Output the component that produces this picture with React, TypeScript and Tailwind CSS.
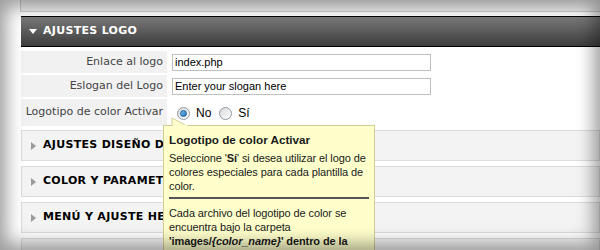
import React from "react";

function Radio({ checked }: { checked?: boolean }) {
  return (
    <span className="flex h-[13px] w-[13px] items-center justify-center rounded-full border border-[#8f9aa6] bg-gradient-to-br from-[#d8d8d8] to-[#ffffff]">
      {checked && (
        <span className="h-[7px] w-[7px] rounded-full border border-[#1c5f9a] bg-gradient-to-br from-[#7fc0f0] to-[#1b6fb5]" />
      )}
    </span>
  );
}

export default function App() {
  const fields = [
    { label: "Enlace al logo", value: "index.php" },
    { label: "Eslogan del Logo", value: "Enter your slogan here" },
  ];

  const sections = ["AJUSTES DISEÑO DE LA PLANTILLA", "COLOR Y PARAMETROS", "MENÚ Y AJUSTE HEADER", ""];

  return (
    <div className="relative h-[250px] w-[600px] overflow-hidden bg-white">
      <div className="pl-[21px]">
        {/* bottom of previous panel */}
        <div className="-ml-px h-[12px] border-b border-l border-[#cfcfcf] bg-[#efefef]" />

        {/* section header */}
        <div className="mt-[4px] flex h-[31px] items-center border-y border-black bg-gradient-to-b from-[#7a7a7a] to-[#3d3d3d] pl-[8px]">
          <span className="h-0 w-0 border-x-[4px] border-t-[5px] border-x-transparent border-t-white" />
          <span className="ml-[6px] font-['DejaVu_Sans',sans-serif] text-[11px] font-bold tracking-[0.3px] text-white">
            AJUSTES LOGO
          </span>
        </div>

        {/* form rows */}
        <div className="mt-[4px] flex flex-col gap-[2px] font-['DejaVu_Sans',sans-serif] text-[11px] text-[#444444]">
          {fields.map((f) => (
            <div key={f.label} className="flex h-[22px] items-center">
              <div className="flex h-full w-[146px] items-center justify-end bg-[#f1f1f1] pr-[4px]">{f.label}</div>
              <div className="ml-[5px] flex h-[17px] w-[259px] items-center border border-[#c0c0c0] px-[2px] font-['Liberation_Sans',sans-serif] text-[11px] text-black">
                {f.value}
              </div>
            </div>
          ))}
          <div className="flex h-[27px] items-start">
            <div className="flex h-full w-[146px] items-start justify-end bg-[#f1f1f1] pr-[4px] pt-[5px]">
              Logotipo de color Activar
            </div>
            <div className="ml-[10px] flex items-center pt-[5px] font-['Liberation_Sans',sans-serif] text-[12px] text-black">
              <Radio checked />
              <span className="ml-[6px]">No</span>
              <span className="ml-[8px]">
                <Radio />
              </span>
              <span className="ml-[6px]">Sí</span>
            </div>
          </div>
        </div>

        {/* collapsed sections */}
        <div className="mt-[4px] flex flex-col gap-[5px]">
          {sections.map((s, i) => (
            <div
              key={i}
              className="flex h-[31px] items-center border border-[#dcdcdc] bg-[#f3f3f3] pl-[9px] font-['DejaVu_Sans',sans-serif] text-[11px] font-bold tracking-[0.3px] text-black"
            >
              {s && (
                <>
                  <span className="h-0 w-0 border-y-[4px] border-l-[5px] border-y-transparent border-l-[#9a9a9a]" />
                  <span className="ml-[7px] whitespace-nowrap">{s}</span>
                </>
              )}
            </div>
          ))}
        </div>
      </div>

      {/* tooltip */}
      <svg className="absolute left-[171px] top-[117px]" width="18" height="10" viewBox="0 0 18 10">
        <path d="M1 1 L1 9 L16 9 Z" fill="#ffffcc" stroke="#d2cf96" strokeWidth="1" />
      </svg>
      <div className="absolute left-[163px] top-[125px] h-[140px] w-[212px] border border-[#d2cf96] bg-[#ffffcc] px-[5px] pt-[6px] font-['Liberation_Sans',sans-serif] text-[11px] leading-[14px] tracking-[-0.1px] text-[#1a1a1a]">
        <div className="absolute -top-px left-[9px] h-[2px] w-[14px] bg-[#ffffcc]" />
        <div className="text-[11.7px] font-bold leading-[16px] tracking-normal">Logotipo de color Activar</div>
        <p className="mt-[3px]">
          Seleccione '<b>Sí</b>' si desea utilizar el logo de colores especiales para cada plantilla de color.
        </p>
        <div className="mt-[4px] h-[2px] bg-[#555555]" />
        <p className="mt-[7px]">
          Cada archivo del logotipo de color se encuentra bajo la carpeta{" "}
          <b>
            'images/<i>{"{color_name}"}</i>' dentro de la
          </b>
        </p>
      </div>

      {/* screen edge shading */}
      <div className="pointer-events-none absolute inset-0 shadow-[inset_0_0_18px_6px_rgba(0,0,0,0.4)]" />
    </div>
  );
}
